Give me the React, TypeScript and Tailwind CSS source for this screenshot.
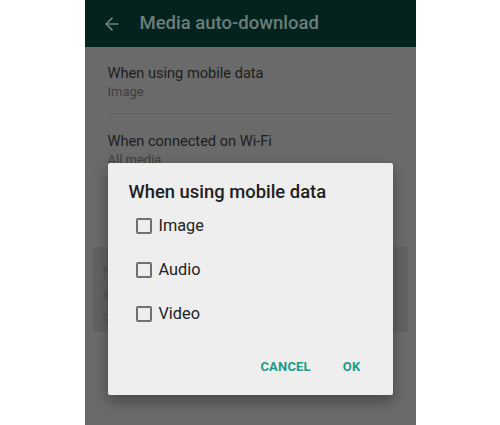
import { ArrowLeft } from "lucide-react"

const options = ["Image", "Audio", "Video"]

export default function App() {
  return (
    <div className="w-[500px] h-[425px] bg-white flex justify-center font-['Roboto',sans-serif]">
      <div className="relative w-[331px] h-full bg-[#6a6a6a] overflow-hidden">
        {/* toolbar */}
        <div className="h-[47px] bg-[#04231f] flex items-center">
          <ArrowLeft size={20} strokeWidth={2} className="ml-[17px] text-[#6f817c]" />
          <span className="ml-[18px] text-[18.5px] font-medium text-[#6b7e79]">Media auto-download</span>
        </div>

        {/* settings list */}
        <div className="px-[23px]">
          <div className="h-[67px] flex flex-col justify-center border-b border-[#626262] pt-[3px]">
            <div className="text-[14.6px] leading-[19px] text-[#1d1d1d]">When using mobile data</div>
            <div className="text-[13px] leading-[17px] text-[#3e3e3e]">Image</div>
          </div>
          <div className="h-[68px] flex flex-col justify-center border-b border-[#626262]">
            <div className="text-[14.6px] leading-[19px] text-[#1d1d1d] pt-[5px]">When connected on Wi-Fi</div>
            <div className="text-[13px] leading-[17px] text-[#3e3e3e]">All media</div>
          </div>
        </div>

        <div className="mx-[8px] mt-[65px] h-[85px] bg-[#626262] px-[10px] pt-[12px] text-[13px] leading-[23px] text-[#525252]">
          <div>Note</div>
          <div>auto</div>
          <div>com</div>
        </div>

        {/* dialog */}
        <div className="absolute left-[23px] top-[163px] w-[285px] h-[232px] bg-[#eeeeee] rounded-[2px] shadow-[0_6px_14px_rgba(0,0,0,0.35)] flex flex-col">
          <div className="pl-[21px] pt-[17px] text-[18.4px] leading-[24px] font-medium text-[#212121]">When using mobile data</div>
          <div className="flex flex-col gap-[20px] mt-[10px]">
            {options.map((o) => (
              <div key={o} className="flex items-center h-[24px] pl-[28px]">
                <div className="w-[16px] h-[16px] border-2 border-[#707070] rounded-[2px]" />
                <span className="ml-[7px] text-[16.3px] text-[#222222]">{o}</span>
              </div>
            ))}
          </div>
          <div className="mt-auto mb-[19px] flex justify-end items-center gap-[32px] pr-[32px] text-[13px] font-bold text-[#1e9a88] tracking-[0.2px]">
            <span>CANCEL</span>
            <span>OK</span>
          </div>
        </div>
      </div>
    </div>
  )
}
